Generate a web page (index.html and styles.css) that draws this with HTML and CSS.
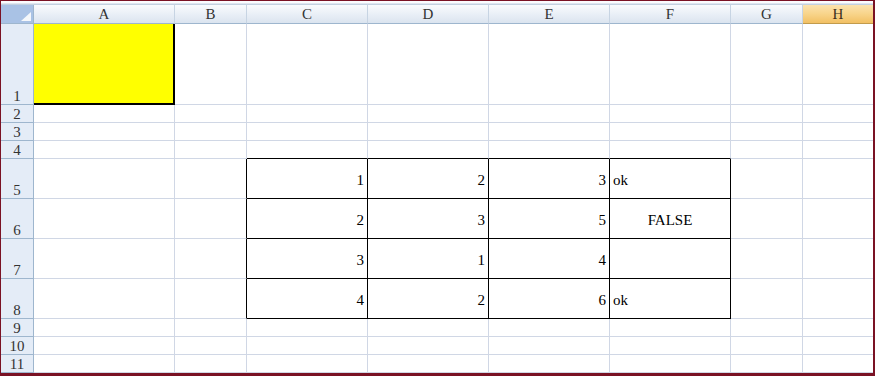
FILE: index.html
```html
<!doctype html>
<html>
    <head>
        <meta charset="utf-8">
        <title>Sheet1</title>
        <link rel="stylesheet" href="styles.css">
    </head>
    <body>
        <div class="window">
            <div class="sheet">
                <!-- column headers -->
                <div class="corner">
                    <svg width="10" height="9" viewBox="0 0 10 9"><path d="M10 0 L10 9 L0 9 Z" fill="#f4f7fb"/></svg>
                </div>
                <div class="h">A</div>
                <div class="h">B</div>
                <div class="h">C</div>
                <div class="h">D</div>
                <div class="h">E</div>
                <div class="h">F</div>
                <div class="h">G</div>
                <div class="h sel">H</div>

                <!-- row 1 -->
                <div class="r">1</div>
                <div class="c fill"></div>
                <div class="c"></div><div class="c"></div><div class="c"></div><div class="c"></div>
                <div class="c"></div><div class="c"></div><div class="c"></div>

                <!-- rows 2-4 -->
                <div class="r">2</div>
                <div class="c"></div><div class="c"></div><div class="c"></div><div class="c"></div>
                <div class="c"></div><div class="c"></div><div class="c"></div><div class="c"></div>
                <div class="r">3</div>
                <div class="c"></div><div class="c"></div><div class="c"></div><div class="c"></div>
                <div class="c"></div><div class="c"></div><div class="c"></div><div class="c"></div>
                <div class="r">4</div>
                <div class="c"></div><div class="c"></div>
                <div class="c tt"></div><div class="c tt"></div><div class="c tt"></div><div class="c tt"></div>
                <div class="c"></div><div class="c"></div>

                <!-- table rows 5-8 -->
                <div class="r">5</div>
                <div class="c"></div><div class="c tl"></div>
                <div class="c t num">1</div><div class="c t num">2</div><div class="c t num">3</div>
                <div class="c t txt">ok</div>
                <div class="c"></div><div class="c"></div>

                <div class="r">6</div>
                <div class="c"></div><div class="c tl"></div>
                <div class="c t num">2</div><div class="c t num">3</div><div class="c t num">5</div>
                <div class="c t mid">FALSE</div>
                <div class="c"></div><div class="c"></div>

                <div class="r">7</div>
                <div class="c"></div><div class="c tl"></div>
                <div class="c t num">3</div><div class="c t num">1</div><div class="c t num">4</div>
                <div class="c t txt"></div>
                <div class="c"></div><div class="c"></div>

                <div class="r">8</div>
                <div class="c"></div><div class="c tl"></div>
                <div class="c t num">4</div><div class="c t num">2</div><div class="c t num">6</div>
                <div class="c t txt">ok</div>
                <div class="c"></div><div class="c"></div>

                <!-- rows 9-11 -->
                <div class="r">9</div>
                <div class="c"></div><div class="c"></div><div class="c"></div><div class="c"></div>
                <div class="c"></div><div class="c"></div><div class="c"></div><div class="c"></div>
                <div class="r">10</div>
                <div class="c"></div><div class="c"></div><div class="c"></div><div class="c"></div>
                <div class="c"></div><div class="c"></div><div class="c"></div><div class="c"></div>
                <div class="r">11</div>
                <div class="c"></div><div class="c"></div><div class="c"></div><div class="c"></div>
                <div class="c"></div><div class="c"></div><div class="c"></div><div class="c"></div>
            </div>
        </div>
    </body>
</html>
```

FILE: styles.css
```css
* {
    margin: 0;
    padding: 0;
    box-sizing: border-box;
}
body {
    background: #fff;
    font-family: "Liberation Serif", "DejaVu Serif", serif;
    font-size: 15px;
    color: #000;
}
.window {
    width: 875px;
    height: 376px;
    border-top: 1px solid #7a1224;
    border-left: 1px solid #7a1224;
    border-right: 2px solid #7a1224;
    border-bottom: 3px solid #7a1224;
    padding-top: 4px;
    background: linear-gradient(#fbfcfe 0 2px, #dfe6ef 2px 3px, #c3d1e1 3px 4px, #fff 4px);
}
.sheet {
    display: grid;
    grid-template-columns: 33px 141px 72px 121px 121px 121px 121px 72px 70px;
    grid-template-rows: 19px 81px 18px 18px 18px 40px 40px 40px 40px 18px 18px 18px;
}

/* headers */
.corner {
    background: #a9c2e5;
    border-right: 1px solid #9eb6ce;
    border-bottom: 1px solid #9eb6ce;
    display: flex;
    align-items: flex-end;
    justify-content: flex-end;
    padding: 0 2px 2px 0;
}
.corner svg {
    display: block;
}
.h {
    background: linear-gradient(#f9fbfd, #e8eef6 55%, #dbe4ef);
    border-right: 1px solid #c7d4e3;
    border-bottom: 1px solid #9eb6ce;
    text-align: center;
    line-height: 19px;
    color: #333;
}
.h.sel {
    background: linear-gradient(#fbe3ae, #f8d48a 50%, #f2c063);
    border-right: 0;
    border-bottom-color: #c29b4c;
    color: #3a3020;
}
.r {
    background: #e4ecf7;
    border-right: 1px solid #9eb6ce;
    border-bottom: 1px solid #9eb6ce;
    color: #333;
    display: flex;
    align-items: flex-end;
    justify-content: center;
    line-height: 14px;
    padding-bottom: 1px;
}

/* cells */
.c {
    border-right: 1px solid #d0d7e5;
    border-bottom: 1px solid #d0d7e5;
    display: flex;
    align-items: center;
    padding: 3px 3px 0 3px;
}
.c:nth-child(9n) {
    border-right: 0;
}
.fill {
    background: #ffff00;
    border-right: 2px solid #000;
    border-bottom: 2px solid #000;
}
.t {
    border-right-color: #000;
    border-bottom-color: #000;
}
.tt {
    border-bottom-color: #000;
}
.tl {
    border-right-color: #000;
}
.num {
    justify-content: flex-end;
}
.txt {
    justify-content: flex-start;
}
.mid {
    justify-content: center;
}
```
